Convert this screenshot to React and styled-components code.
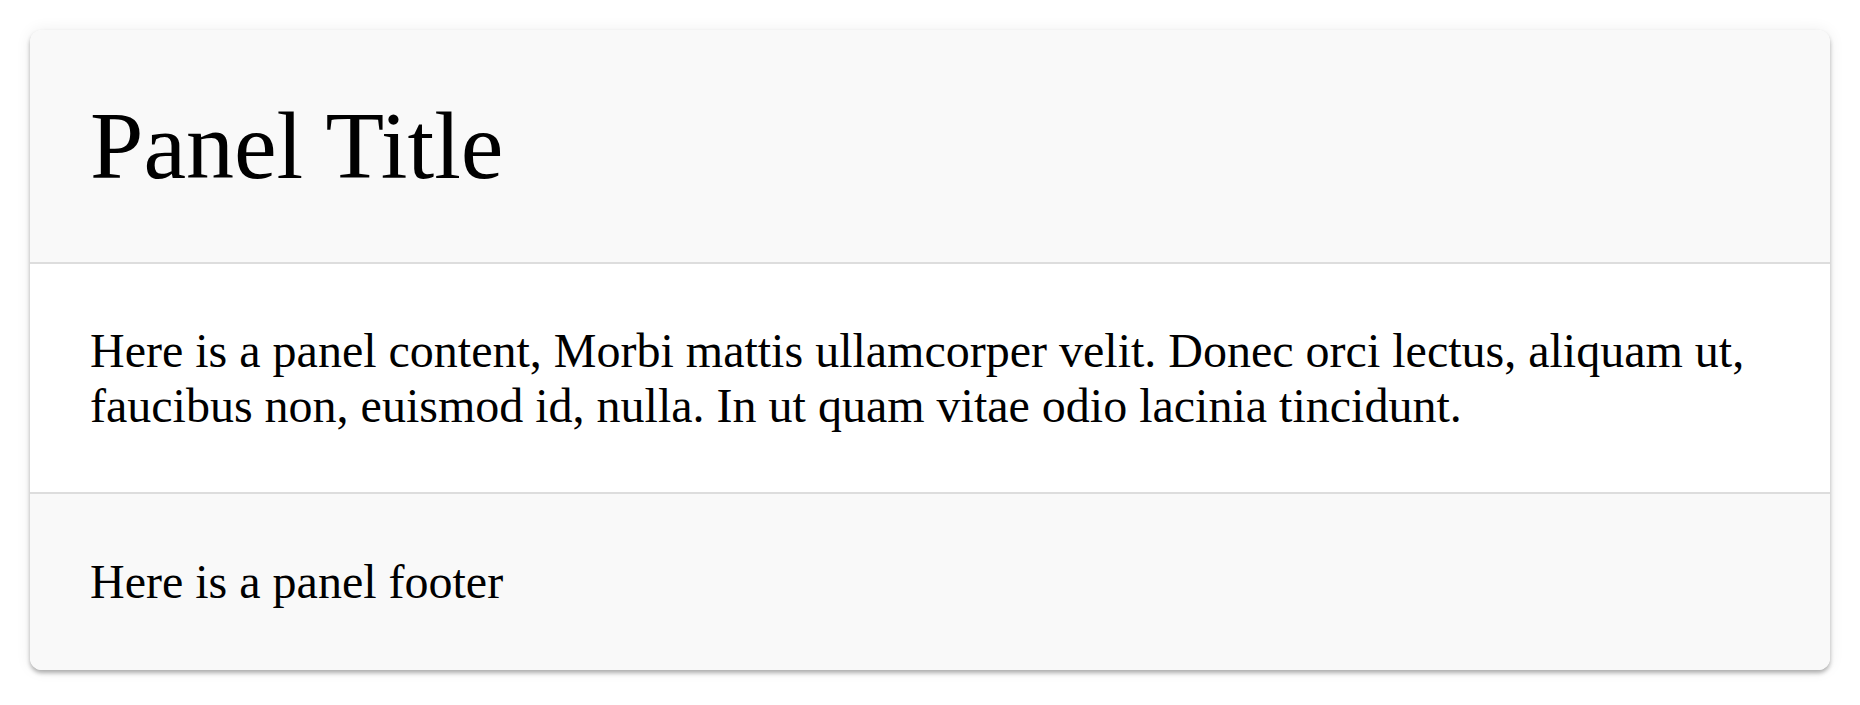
import React from 'react';
import styled, { createGlobalStyle } from 'styled-components';

const GlobalStyle = createGlobalStyle`
  html, body {
    margin: 0;
    padding: 0;
    background: #fff;
  }
  body {
    font-family: "Liberation Serif", "Times New Roman", serif;
    color: #000;
  }
`;

const Page = styled.div`
  padding: 30px;
`;

const Panel = styled.section`
  background: #fff;
  border-radius: 12px;
  overflow: hidden;
  box-shadow: 0 0 16px rgba(0, 0, 0, 0.07), 0 3px 4px rgba(0, 0, 0, 0.3);
`;

const Header = styled.header`
  background: #f9f9f9;
  padding: 60px 60px 61px;
  border-bottom: 2px solid #dddddd;
`;

const Title = styled.h1`
  margin: 0;
  font-size: 96px;
  font-weight: normal;
  line-height: normal;
`;

const Body = styled.div`
  padding: 59px 60px;
  font-size: 48px;
  line-height: normal;
  border-bottom: 2px solid #dddddd;
`;

const Footer = styled.footer`
  background: #f9f9f9;
  padding: 60px 60px 61px;
  font-size: 48px;
  line-height: normal;
`;

const App = () => {
  return (
    <Page>
      <GlobalStyle />
      <Panel>
        <Header>
          <Title>Panel Title</Title>
        </Header>
        <Body>
          Here is a panel content, Morbi mattis ullamcorper velit. Donec orci lectus, aliquam ut,
          faucibus non, euismod id, nulla. In ut quam vitae odio lacinia tincidunt.
        </Body>
        <Footer>Here is a panel footer</Footer>
      </Panel>
    </Page>
  );
};

export default App;
